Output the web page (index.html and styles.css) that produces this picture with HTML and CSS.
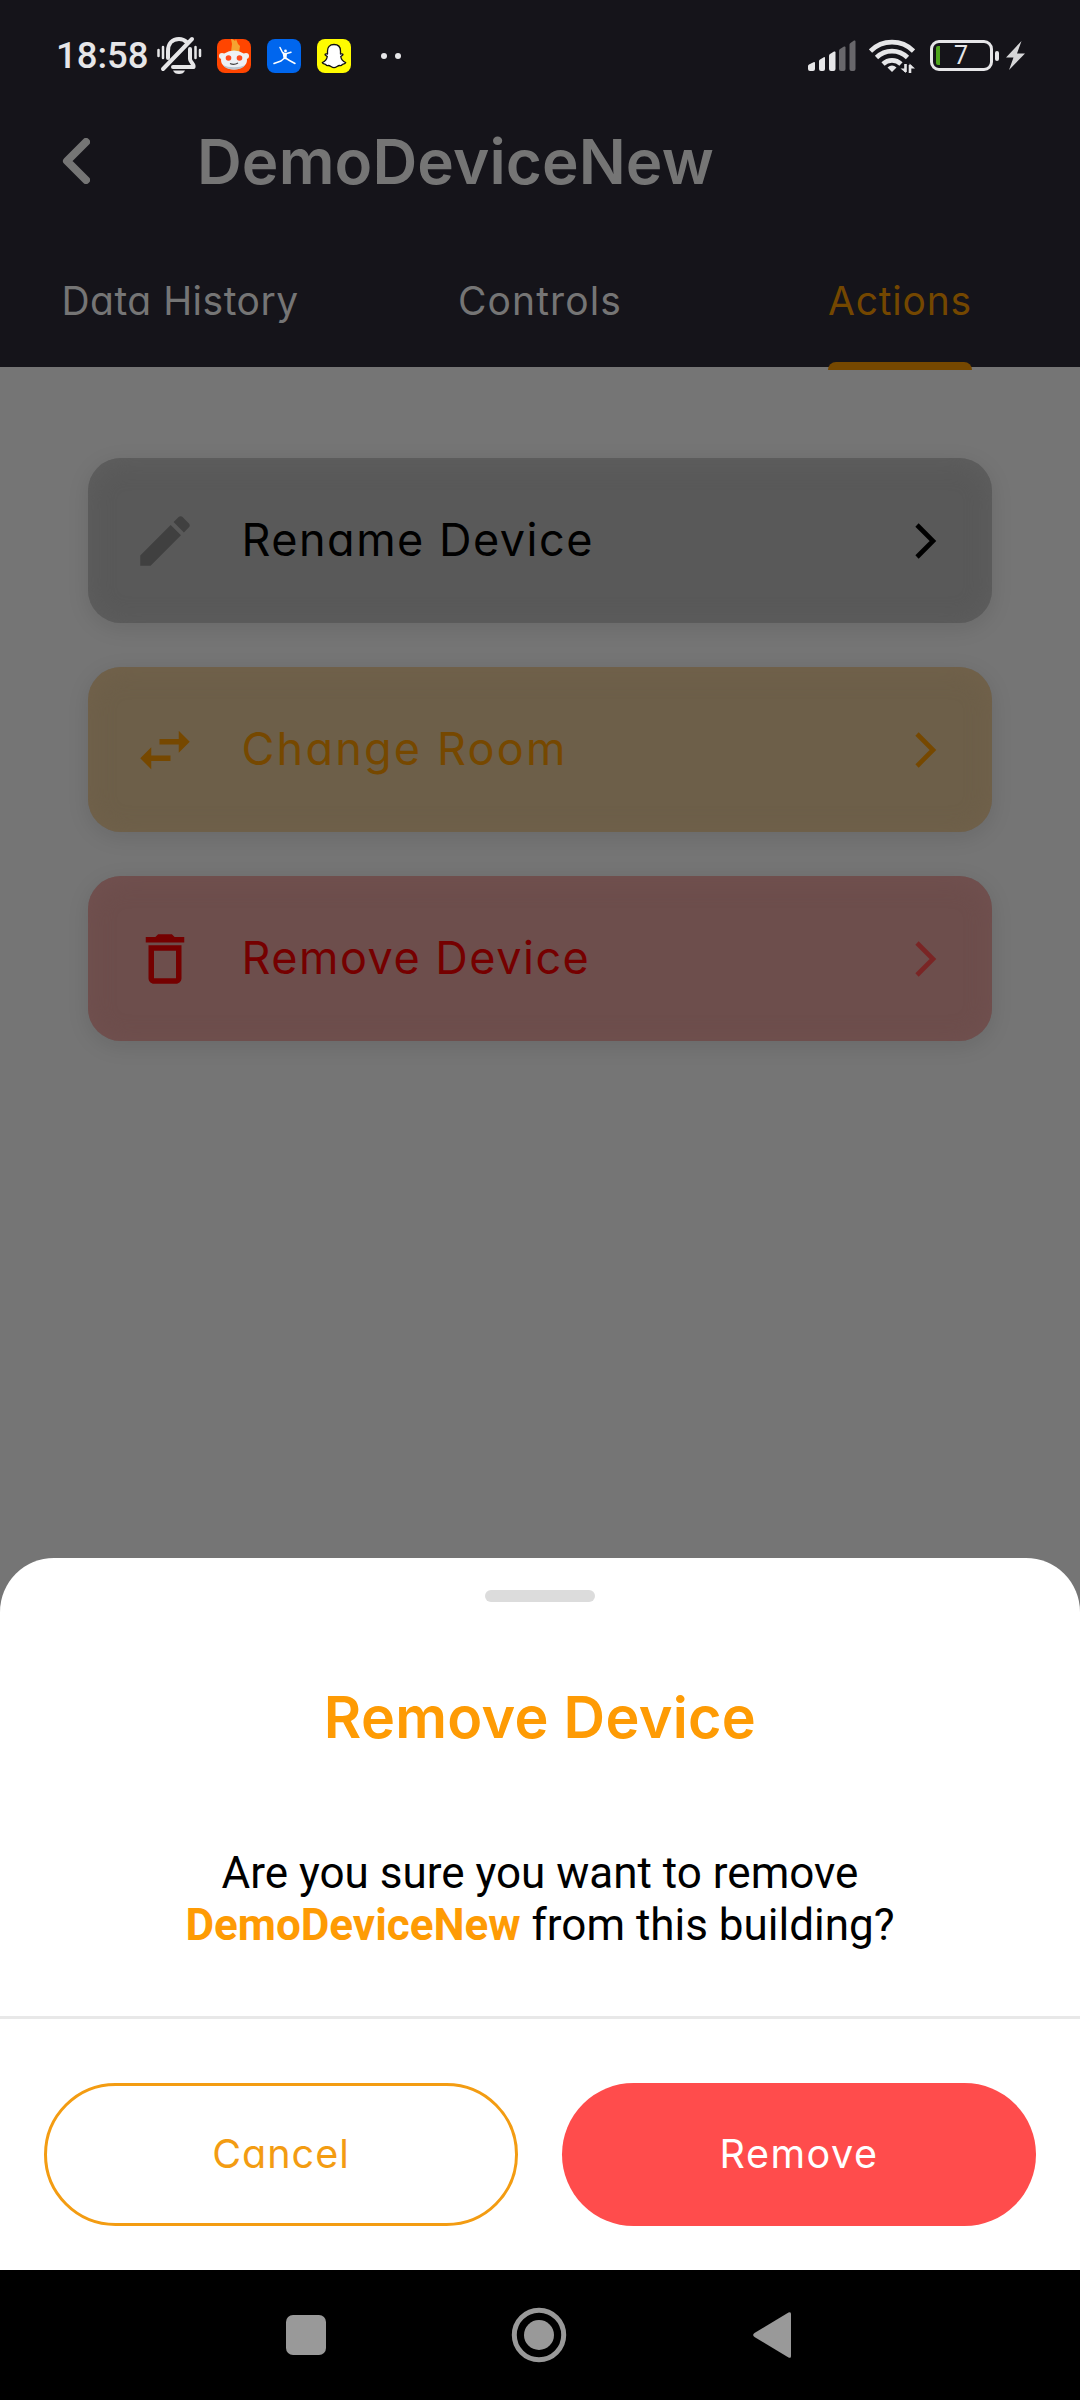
FILE: index.html
```html
<!DOCTYPE html>
<html lang="en">
<head>
<meta charset="utf-8">
<title>DemoDeviceNew</title>
<link rel="stylesheet" href="styles.css">
</head>
<body>
<div class="screen">
  <header class="header">
    <div class="status">
      <span class="clock">18:58</span>
      <svg class="bell" viewBox="0 0 46 42" fill="none" stroke="#e6e6e8" stroke-linecap="round">
        <path d="M12 23V16C12 9 16 4 23 4c3 0 5.500 1 7.500 3M34 14v10c0 3 4.500 5 3.500 8H17" stroke-width="4" stroke-linejoin="round"/>
        <path d="M36 4L7 34" stroke-width="4"/>
        <path d="M2.500 15v6M7 12v11M39.500 12v11M44 15v6" stroke-width="2.500"/>
        <path d="M17 35.500h12c-1 2.500-3 3.500-6 3.500s-5-1-6-3.500z" fill="#e6e6e8" stroke="none"/>
      </svg>
      <svg class="app" viewBox="0 0 34 34">
        <rect width="34" height="34" rx="8" fill="#ff4500"/>
        <path d="M14 13L15 5l-1-5c2 0 3 1 4 2l1-2 2 5 2 2-1 7z" fill="#f5a431"/>
        <circle cx="5" cy="17" r="3" fill="#eee"/><circle cx="29" cy="17" r="3" fill="#eee"/>
        <ellipse cx="17" cy="21" rx="13" ry="9.500" fill="#eef1f4"/>
        <path d="M6 26c3 6 19 6 22 0c-5 3-17 3-22 0z" fill="#b9c5ce"/>
        <circle cx="11.500" cy="19" r="2.800" fill="#ff4a1c"/><circle cx="22.500" cy="19" r="2.800" fill="#ff4a1c"/>
        <path d="M13 24.500q4 2 8-.5" stroke="#444" stroke-width="1.200" fill="none"/>
      </svg>
      <svg class="app" viewBox="0 0 34 34">
        <rect width="34" height="34" rx="8" fill="#0066ee"/>
        <circle cx="18.500" cy="12" r="1.400" fill="#fff"/>
        <path d="M13 8.500l2.500 5 2.500 1.500 6-1.800M18 15v4.500M17.500 19l-3.500 3-7 2.500M18.500 19l4 2.500 5.500 3" stroke="#fff" stroke-width="1.500" fill="none" stroke-linecap="round" stroke-linejoin="round"/>
        <path d="M15.500 13.500l4.500 1-.5 5h-3z" fill="#fff"/>
      </svg>
      <svg class="app" viewBox="0 0 34 34">
        <rect width="34" height="34" rx="8" fill="#fffc00"/>
        <path d="M17 5.500c4.500 0 6.500 3 6.500 6.500v3c1 0 2-.5 2.500.3.500 1-1.500 1.700-2.300 2.200.5 3 2.500 5 5 6-.5 1.500-2.700 1.500-3.500 2-.3 1-.8 1.300-2.700 1-2 0-3 2.200-5.500 2.200s-3.500-2.200-5.500-2.200c-1.900.3-2.400 0-2.700-1-.8-.5-3-.5-3.500-2 2.500-1 4.500-3 5-6-.8-.5-2.800-1.200-2.300-2.200.5-.8 1.500-.3 2.500-.3v-3c0-3.500 2-6.500 6.500-6.500z" fill="#fff" stroke="#111" stroke-width="1.300" stroke-linejoin="round"/>
      </svg>
      <svg class="more" viewBox="0 0 20 6" fill="#e6e6e8"><circle cx="3" cy="3" r="3"/><circle cx="17" cy="3" r="3"/></svg>
      <svg class="signal" viewBox="0 0 48 31">
        <g fill="#e6e6e8"><path d="M0 26q0-1 1-1.500l4.500-2.300q1.500-.6 1.500.8V29q0 2-2 2H2q-2 0-2-2z"/><path d="M11 21q0-1 1-1.600l3.800-2.200q1.200-.5 1.200.8V29q0 2-2 2h-2q-2 0-2-2z"/><path d="M21 15.500q0-1 1-1.600l4-2.300q1.500-.6 1.500.8V29q0 2-2 2H23q-2 0-2-2z"/></g>
        <g fill="#68676b"><path d="M31 10.500q0-1 1-1.600l4-2.300q1.500-.6 1.500.8V29q0 2-2 2H33q-2 0-2-2z"/><path d="M41.500 4.500q0-1 1-1.600l3.500-2.300q1.500-.6 1.500.8V29q0 2-2 2h-2q-2 0-2-2z"/></g>
      </svg>
      <svg class="wifi" viewBox="0 0 46 36" fill="none" stroke="#e6e6e8" stroke-width="4.600">
        <path d="M1.500 13a30.500 30.500 0 0 1 43 0M7.500 19.500a22 22 0 0 1 31 0M14 26a13 13 0 0 1 18 0"/>
        <path d="M23 34l-4.500-4.500q4.500-4 9 0z" fill="#e6e6e8" stroke="none"/>
        <path d="M36.500 26v8M41 27v8" stroke-width="2.600"/>
        <path d="M31.500 30.500h5.500v4.500zM40.500 25.500v5H46z" fill="#e6e6e8" stroke="none"/>
      </svg>
      <div class="battery"><span class="charge"></span><span class="percent">7</span></div>
      <span class="battery-cap"></span>
      <svg class="bolt" viewBox="0 0 19 29"><path d="M15.500 0L0 16.500h7.500L3 29 19 12.500h-8z" fill="#d6d6d8"/></svg>
    </div>
    <div class="titlebar">
      <svg class="back" viewBox="0 0 28 46"><path d="M24 4L5 23l19 19" fill="none" stroke="#757575" stroke-width="8" stroke-linecap="round" stroke-linejoin="round"/></svg>
      <h1 class="title">DemoDeviceNew</h1>
    </div>
    <nav class="tabs">
      <span class="tab tab-history">Data History</span>
      <span class="tab tab-controls">Controls</span>
      <span class="tab tab-actions">Actions</span>
    </nav>
  </header>
  <main class="actions">
    <div class="card rename">
      <svg class="icon" viewBox="0 0 24 24"><path d="M20.710 7.040C21.100 6.650 21.100 6 20.710 5.630L18.370 3.290C18 2.900 17.350 2.900 16.960 3.290L15.120 5.120 18.870 8.870M3 17.250V21H6.750L17.810 9.930 14.060 6.180 3 17.250Z"/></svg>
      <span class="label">Rename Device</span>
      <svg class="chevron" viewBox="0 0 22 38"><path d="M2 3L18 19 2 35"/></svg>
    </div>
    <div class="card change">
      <svg class="icon" viewBox="0 0 24 24"><path d="M21 9L17 5V8H10V10H17V13M7 11L3 15 7 19V16H14V14H7V11Z"/></svg>
      <span class="label">Change Room</span>
      <svg class="chevron" viewBox="0 0 22 38"><path d="M2 3L18 19 2 35"/></svg>
    </div>
    <div class="card remove">
      <svg class="icon" viewBox="0 0 24 24"><path d="M6 19c0 1.100.9 2 2 2h8c1.100 0 2-.9 2-2V7H6v12zM8 9h8v10H8V9zm7.500-5l-1-1h-5l-1 1H5v2h14V4h-3.500z"/></svg>
      <span class="label">Remove Device</span>
      <svg class="chevron" viewBox="0 0 22 38"><path d="M2 3L18 19 2 35"/></svg>
    </div>
  </main>
  <section class="sheet">
    <div class="handle"></div>
    <h2 class="sheet-title">Remove Device</h2>
    <p class="message">Are you sure you want to remove<br><b>DemoDeviceNew</b> from this building?</p>
    <div class="buttons">
      <button class="btn cancel">Cancel</button>
      <button class="btn confirm">Remove</button>
    </div>
  </section>
  <footer class="navbar">
    <svg class="nav-square" viewBox="0 0 40 40"><rect width="40" height="40" rx="7" fill="#999"/></svg>
    <svg class="nav-home" viewBox="0 0 56 56"><circle cx="28" cy="28" r="24.700" fill="none" stroke="#999" stroke-width="5"/><circle cx="28" cy="28" r="15" fill="#999"/></svg>
    <svg class="nav-back" viewBox="0 0 38 46"><path d="M35.500 .6Q38-.8 38 2v42q0 2.800-2.500 1.400L1.500 25Q-1.200 23 1.500 21z" fill="#999"/></svg>
  </footer>
</div>
</body>
</html>
```
FILE: styles.css
```css
* { box-sizing: border-box; margin: 0; padding: 0; }
body { width: 1080px; height: 2400px; background: #757575; font-family: Inter, "Open Sans", sans-serif; font-feature-settings: "cv11"; }
svg { display: block; flex: none; }
.screen { width: 1080px; height: 2400px; display: flex; flex-direction: column; overflow: hidden; }
span, h1, h2, button { white-space: nowrap; }

.header { height: 367px; background: #15141a; display: flex; flex-direction: column; flex: none; }
.status { height: 110px; display: flex; align-items: center; padding: 1px 0 0 56px; }
.clock { width: 101px; padding-top: 1px; font: 500 36.500px/40px Roboto, sans-serif; color: #e6e6e8; }
.bell { width: 46px; height: 42px; margin: 0 15px 0 -1px; }
.app { width: 34px; height: 34px; margin-right: 16px; }
.more { width: 20px; height: 6px; margin-left: 14px; }
.signal { width: 48px; height: 31px; margin-left: 407px; }
.wifi { width: 46px; height: 36px; margin-left: 13px; }
.battery { width: 63px; height: 31px; margin-left: 15px; border: 3.500px solid #e6e6e8; border-radius: 9px; display: flex; align-items: center; padding-left: 3px; }
.charge { width: 4px; height: 19px; background: #4ea51c; border-radius: 2px 0 0 2px; }
.percent { font: 400 25px/25px Roboto, sans-serif; color: #e6e6e8; width: 42px; text-align: center; }
.battery-cap { width: 4px; height: 10px; margin-left: 2px; border-radius: 2px; background: #e6e6e8; }
.bolt { width: 19px; height: 29px; margin-left: 7px; }

.titlebar { height: 102px; display: flex; align-items: center; padding-left: 62px; }
.back { width: 28px; height: 46px; }
.title { margin: 2px 0 0 107px; font-size: 62px; line-height: 80px; font-weight: 600; letter-spacing: .1px; color: #757575; }
.tabs { height: 158px; margin-top: -3px; display: grid; grid-template-columns: repeat(3, 360px); justify-items: center; }
.tab { padding-top: 69px; font-size: 39px; line-height: 46px; color: #757575; }
.tab-history { letter-spacing: .5px; }
.tab-controls { letter-spacing: 1.100px; }
.tab-actions { width: 144px; color: #744700; letter-spacing: .8px; text-align: center; }
.tab-actions::after { content: ""; display: block; height: 8px; margin-top: 38px; border-radius: 8px 8px 0 0; background: #764800; }

.actions { flex: 1; display: flex; flex-direction: column; gap: 44px; padding: 91px 88px 0; }
.card { height: 165px; border-radius: 33px; display: flex; align-items: center; padding: 0 55px 0 44px; }
.icon { width: 66px; height: 66px; fill: currentColor; }
.label { flex: 1; margin-left: 43.500px; padding-bottom: 2px; font-size: 45px; line-height: 56px; letter-spacing: 1.500px; }
.change .label { letter-spacing: 2.200px; }
.chevron { width: 22px; height: 38px; fill: none; stroke: currentColor; stroke-width: 4.600; }
.rename { background: #595959; color: #000; box-shadow: 0 5px 22px rgba(0,0,0,.1), inset 0 3px 24px #5f5f5f; }
.rename .icon { color: #404040; }
.change { background: #6d5f49; color: #764800; box-shadow: 0 5px 22px rgba(0,0,0,.1), inset 0 3px 24px #72624b; }
.remove { background: #6d4e4c; color: #750000; box-shadow: 0 5px 22px rgba(0,0,0,.1), inset 0 3px 24px #725150; }
.remove .chevron { color: #7a2525; }

.sheet { height: 712px; flex: none; background: #fff; border-radius: 54px 54px 0 0; display: flex; flex-direction: column; align-items: center; }
.handle { width: 110px; height: 12px; margin-top: 32px; border-radius: 6px; background: #dcdcdc; }
.sheet-title { margin-top: 77px; font-size: 57.500px; line-height: 76px; font-weight: 600; letter-spacing: .3px; color: #fe9b04; }
.message { margin-top: 92px; font: 400 44px/52px Roboto, sans-serif; color: #000; text-align: center; white-space: nowrap; }
.message b { color: #fe9b04; font-weight: 700; }
.buttons { width: 1080px; margin-top: 65px; border-top: 3px solid #e8e8e8; display: grid; grid-template-columns: 474px 474px; gap: 44px; padding: 64px 44px 0; }
.btn { height: 143px; padding-bottom: 2px; border-radius: 72px; font: 400 39.500px/50px Inter, sans-serif; font-feature-settings: "cv11"; }
.cancel { border: 3px solid #f39c12; background: #fff; color: #f39c12; letter-spacing: 1px; }
.confirm { border: 0; background: #ff4c4c; color: #fff; letter-spacing: 1.500px; }

.navbar { height: 130px; flex: none; background: #000; display: flex; align-items: center; padding-left: 286px; }
.nav-square { width: 40px; height: 40px; }
.nav-home { width: 56px; height: 56px; margin-left: 185px; }
.nav-back { width: 38px; height: 46px; margin-left: 186px; }
```
